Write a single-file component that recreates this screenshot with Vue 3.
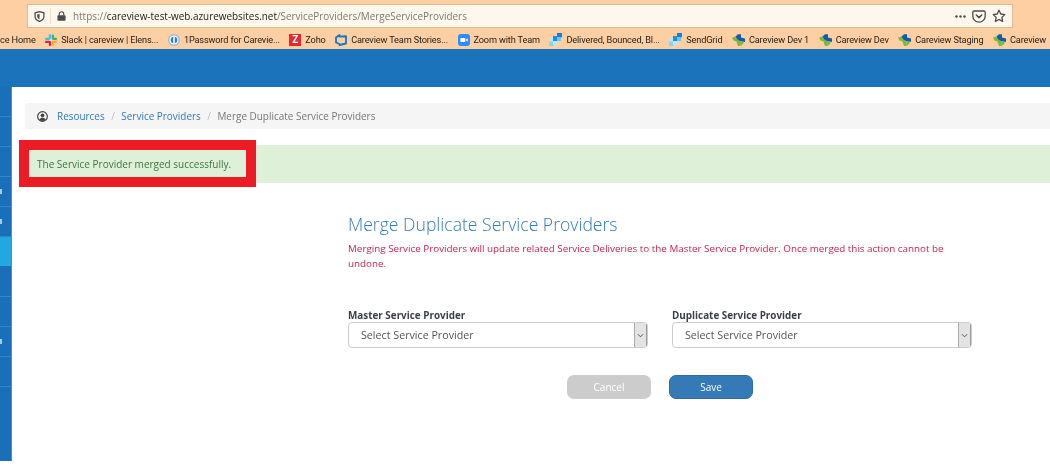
<script setup>
const bookmarks = [
  { label: 'Slack | careview | Elens...', icon: 'slack' },
  { label: '1Password for Carevie...', icon: 'onepass' },
  { label: 'Zoho', icon: 'zoho' },
  { label: 'Careview Team Stories...', icon: 'boards' },
  { label: 'Zoom with Team', icon: 'zoom' },
  { label: 'Delivered, Bounced, Bl...', icon: 'grid' },
  { label: 'SendGrid', icon: 'grid' },
  { label: 'Careview Dev 1', icon: 'care' },
  { label: 'Careview Dev', icon: 'care' },
  { label: 'Careview Staging', icon: 'care' },
  { label: 'Careview', icon: 'care' }
]
const sideRows = [
  { id: 1 }, { id: 2 }, { id: 3 }, { id: 4, mark: true }, { id: 5, mark: true },
  { id: 6, active: true }, { id: 7 }, { id: 8 }, { id: 9, mark: true }, { id: 10 }
]
</script>

<template>
  <div class="page">
    <div class="chrome">
      <div class="urlbar">
        <svg class="ic-shield" viewBox="0 0 12 12" width="11" height="11">
          <path d="M6 .8 10.800 2v4c0 2.700-2.200 4.500-4.800 5.400C3.400 10.500 1.200 8.700 1.200 6V2Z" fill="none" stroke="#4a4a4f" stroke-width="1.400"/>
          <path d="M6 3v6C4.400 8.300 3.500 7.300 3.500 5.800V3.700Z" fill="#4a4a4f"/>
        </svg>
        <span class="divider"></span>
        <svg class="ic-lock" viewBox="0 0 10 11" width="9" height="10">
          <path d="M2.500 5V3.300a2.500 2.500 0 0 1 5 0V5" fill="none" stroke="#4a4a4f" stroke-width="1.300"/>
          <rect x=".5" y="4.700" width="9" height="6" rx="1" fill="#4a4a4f"/>
        </svg>
        <span class="url"><span class="dim">https://</span>careview-test-web.azurewebsites.net<span class="dim">/ServiceProviders/MergeServiceProviders</span></span>
        <span class="url-actions">
          <svg viewBox="0 0 11 3" width="11" height="3"><circle cx="1.500" cy="1.500" r="1.200" fill="#4a4a4f"/><circle cx="5.500" cy="1.500" r="1.200" fill="#4a4a4f"/><circle cx="9.500" cy="1.500" r="1.200" fill="#4a4a4f"/></svg>
          <svg viewBox="0 0 14 13" width="14" height="13"><path d="M2 1h10a1.200 1.200 0 0 1 1.200 1.200V6A6.200 6.200 0 0 1 .8 6V2.200A1.200 1.200 0 0 1 2 1Z" fill="none" stroke="#4a4a4f" stroke-width="1.300"/><path d="m4.300 5 2.700 2.600L9.700 5" fill="none" stroke="#4a4a4f" stroke-width="1.500" stroke-linecap="round"/></svg>
          <svg viewBox="0 0 14 14" width="14" height="14"><path d="m7 1.300 1.800 3.700 4 .6-2.900 2.800.7 4L7 10.500l-3.600 1.900.7-4L1.200 5.600l4-.6Z" fill="none" stroke="#4a4a4f" stroke-width="1.300" stroke-linejoin="round"/></svg>
        </span>
      </div>
      <div class="bookmarks">
        <span class="bm bm-cut">ce Home</span>
        <span v-for="b in bookmarks" :key="b.label" class="bm">
          <svg v-if="b.icon === 'slack'" viewBox="0 0 12 12" width="12" height="12">
            <rect x="3.800" y="0" width="2.200" height="5" rx="1.100" fill="#36c5f0"/><rect x="0" y="3.800" width="5" height="2.200" rx="1.100" fill="#36c5f0"/>
            <rect x="6.800" y="0.500" width="2.200" height="5" rx="1.100" fill="#2eb67d"/><rect x="7.500" y="3.800" width="4.500" height="2.200" rx="1.100" fill="#2eb67d"/>
            <rect x="6.800" y="7" width="2.200" height="5" rx="1.100" fill="#ecb22e"/><rect x="7" y="6.800" width="5" height="2.200" rx="1.100" fill="#ecb22e"/>
            <rect x="3.800" y="7" width="2.200" height="5" rx="1.100" fill="#e01e5a"/><rect x="0" y="6.800" width="5" height="2.200" rx="1.100" fill="#e01e5a"/>
          </svg>
          <svg v-else-if="b.icon === 'onepass'" viewBox="0 0 12 12" width="12" height="12">
            <circle cx="6" cy="6" r="6" fill="#9fb8d6"/><circle cx="6" cy="6" r="4.600" fill="#fff"/><circle cx="6" cy="6" r="3.300" fill="#2a7fd4"/><rect x="5.200" y="3" width="1.600" height="6" rx=".6" fill="#fff"/>
          </svg>
          <span v-else-if="b.icon === 'zoho'" class="zoho">Z</span>
          <svg v-else-if="b.icon === 'boards'" viewBox="0 0 12 12" width="12" height="12">
            <path d="M1 3.500 4.500 1v1.500h6.500V9.500L4.500 11v-1L1 8.500Z" fill="none" stroke="#0f78d4" stroke-width="1.800" stroke-linejoin="round"/>
            <path d="M8.500 1.500h3v3Z" fill="#0f78d4"/>
          </svg>
          <svg v-else-if="b.icon === 'zoom'" viewBox="0 0 12 12" width="12" height="12">
            <rect width="12" height="12" rx="3" fill="#2d8cff"/><rect x="2.300" y="4" width="5" height="4" rx="1" fill="#fff"/><path d="m7.800 5.700 2-1.400v3.400l-2-1.400Z" fill="#fff"/>
          </svg>
          <svg v-else-if="b.icon === 'grid'" viewBox="0 0 13 13" width="13" height="13">
            <rect x="8" y="0" width="5" height="4.500" fill="#0d82df"/><rect x="4" y="3" width="5" height="5" fill="#1a8fe8"/><rect x="8" y="4" width="4" height="4" fill="#6ec5f5"/>
            <rect x="0" y="8" width="4.500" height="5" fill="#8cd3f8"/><rect x="4" y="8" width="4" height="4" fill="#b8e6fb"/><rect x="0" y="5" width="4" height="3.500" fill="#b8e6fb"/>
          </svg>
          <svg v-else viewBox="0 0 13 12" width="13" height="12">
            <path d="M0 3.500 4 2.500 8 7 8.500 12H6L4.500 7.500 1.500 6.500Z" fill="#7ab648"/>
            <path d="M8 7 12 8.500 10 11 8.500 12Z" fill="#7ab648"/>
            <path d="M3.500 2.500 6 .2H9V3.500L13 4.500V8L8 7 5.500 5.500Z" fill="#0e5fa8"/>
          </svg>
          <span>{{ b.label }}</span>
        </span>
      </div>
    </div>

    <header class="topbar"></header>

    <div class="body">
      <nav class="sidebar">
        <div v-for="r in sideRows" :key="r.id" class="side-row" :class="{ active: r.active }">
          <span v-if="r.mark" class="side-mark"></span>
        </div>
        <div class="side-fill"></div>
      </nav>

      <main class="main">
        <div class="crumbs">
          <svg viewBox="0 0 12 12" width="11" height="11">
            <circle cx="6" cy="6" r="5.300" fill="none" stroke="#444" stroke-width="1.300"/>
            <circle cx="6" cy="4.700" r="2" fill="#444"/>
            <path d="M2.600 9.600C3.300 7.900 4.500 7.400 6 7.400s2.700.5 3.400 2.200A5 5 0 0 1 6 11a5 5 0 0 1-3.400-1.400Z" fill="#444"/>
          </svg>
          <a class="crumb-link">Resources</a>
          <span class="sep">/</span>
          <a class="crumb-link">Service Providers</a>
          <span class="sep">/</span>
          <span class="crumb-current">Merge Duplicate Service Providers</span>
        </div>

        <div class="alert">
          <span>The Service Provider merged successfully.</span>
          <div class="annotation"></div>
        </div>

        <section class="form">
          <h1>Merge Duplicate Service Providers</h1>
          <p class="warn">Merging Service Providers will update related Service Deliveries to the Master Service Provider. Once merged this action cannot be undone.</p>
          <div class="fields">
            <div class="field">
              <label>Master Service Provider</label>
              <div class="select">
                <span>Select Service Provider</span>
                <span class="arrow"><svg viewBox="0 0 8 5" width="7" height="5"><path d="m1 1 3 3 3-3" fill="none" stroke="#444" stroke-width="1"/></svg></span>
              </div>
            </div>
            <div class="field">
              <label>Duplicate Service Provider</label>
              <div class="select">
                <span>Select Service Provider</span>
                <span class="arrow"><svg viewBox="0 0 8 5" width="7" height="5"><path d="m1 1 3 3 3-3" fill="none" stroke="#444" stroke-width="1"/></svg></span>
              </div>
            </div>
          </div>
          <div class="actions">
            <button class="btn cancel" type="button">Cancel</button>
            <button class="btn save" type="button">Save</button>
          </div>
        </section>
      </main>
    </div>
  </div>
</template>

<style>
html, body { margin: 0; background: #fff; overflow: hidden; }
</style>

<style scoped>
.page {
  width: 1050px;
  height: 468px;
  display: flex;
  flex-direction: column;
  font-family: "Open Sans", "Liberation Sans", sans-serif;
  overflow: hidden;
  background: #fff;
  filter: blur(0.3px);
}
.chrome {
  height: 49px;
  background: #fdcfa3;
  padding: 5px 38px 0 0;
  box-sizing: border-box;
  position: relative;
}
.urlbar {
  height: 22px;
  margin-left: 28px;
  background: #fff6ec;
  box-shadow: 0 0 1px 1px #e0bd9c;
  display: flex;
  align-items: center;
  padding: 0 6px;
  box-sizing: border-box;
}
.ic-shield { flex: none; }
.divider { width: 1px; height: 16px; background: #eedfd0; margin: 0 6px 0 5px; }
.ic-lock { flex: none; }
.url { margin-left: 7px; font-size: 9.920px; color: #222; white-space: nowrap; }
.dim { color: #7d7a78; }
.url-actions { margin-left: auto; display: flex; align-items: center; gap: 6px; }
.bookmarks {
  display: flex;
  align-items: center;
  gap: 9.500px;
  height: 19px;
  margin-top: 3px;
  font-family: Roboto, "Liberation Sans", sans-serif;
  font-size: 9.200px;
  letter-spacing: -0.150px;
  color: #222;
  white-space: nowrap;
}
.bm { display: inline-flex; align-items: center; gap: 4px; flex: none; }
.zoho {
  width: 12px; height: 12px; background: #e8262d; color: #fff;
  font-size: 10px; font-weight: 700; line-height: 12px; text-align: center;
}
.topbar { height: 38px; background: #1a73bb; flex: none; }
.body { display: flex; height: 374px; flex: none; }
.sidebar {
  width: 12px;
  background: #1a6fb8;
  border-right: 1px solid #3a94d4;
  box-sizing: border-box;
  height: 374px;
  display: flex;
  flex-direction: column;
  flex: none;
}
.side-row {
  height: 30px;
  border-bottom: 1px solid #2a8acb;
  box-sizing: border-box;
  display: flex;
  align-items: center;
  justify-content: flex-start;
}
.side-row.active { background: #22a7e0; border-bottom-color: #1a6fb8; }
.side-mark { width: 2px; height: 5px; background: #a9cbe6; }
.side-fill { flex: 1; }
.main { flex: 1; padding: 16px 0 0 13px; min-width: 0; }
.crumbs {
  height: 26px;
  background: #f5f5f5;
  border-radius: 3px 0 0 3px;
  display: flex;
  align-items: center;
  padding-left: 12px;
  font-size: 9.950px;
}
.crumb-link { color: #337ab7; margin-left: 9px; }
.sep { color: #bbb; margin: 0 6.500px; }
.sep + .crumb-link, .sep + .crumb-current { margin-left: 0; }
.crumb-current { color: #777; }
.alert {
  position: relative;
  margin-top: 16px;
  height: 38px;
  background: #dff0d8;
  border-radius: 3px 0 0 3px;
  color: #3c763d;
  font-size: 10px;
  display: flex;
  align-items: center;
  padding-left: 12px;
}
.annotation {
  position: absolute;
  left: -6px;
  top: -5px;
  width: 237px;
  height: 47px;
  box-sizing: border-box;
  border: 10px solid #ed1c24;
}
.form { width: 624px; margin: 29px 0 0 323px; }
h1 {
  margin: 0;
  font-size: 17.600px;
  font-weight: 300;
  line-height: 24px;
  color: #337ab7;
}
.warn {
  margin: 5px 0 0;
  font-size: 9.850px;
  line-height: 14.500px;
  color: #c7254e;
  width: 620px;
}
.fields { display: flex; gap: 24px; margin-top: 38px; }
.field { width: 300px; }
label {
  display: block;
  font-size: 9.900px;
  font-weight: 700;
  line-height: 14px;
  color: #3a3f4b;
}
.select {
  height: 26px;
  box-sizing: border-box;
  border: 1px solid #ccc;
  border-radius: 4px;
  display: flex;
  align-items: center;
  justify-content: space-between;
  padding-left: 12px;
  font-size: 10.700px;
  color: #555;
  background: #fff;
  overflow: hidden;
}
.arrow {
  width: 13px;
  height: 24px;
  background: #e3e3e3;
  border-left: 1px solid #aaa;
  border-right: 1px solid #999;
  box-sizing: border-box;
  display: flex;
  align-items: center;
  justify-content: center;
}
.actions { display: flex; gap: 18px; margin: 27px 0 0 219px; }
.btn {
  width: 84px;
  height: 24px;
  border-radius: 7px;
  border: 1px solid transparent;
  font-family: inherit;
  font-size: 10px;
  color: #fff;
  padding: 0;
}
.cancel { background: #cccccc; }
.save { background: #337ab7; border-color: #2e6da4; }
</style>
